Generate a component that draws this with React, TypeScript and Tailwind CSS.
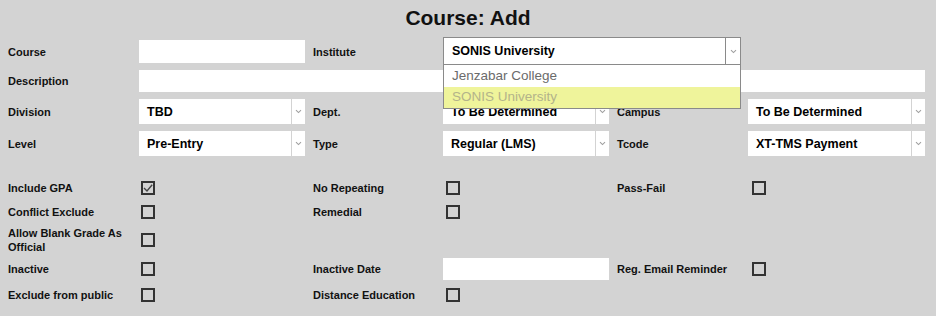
const GRID = "grid grid-cols-[131px_166px_138px_166px_139px_177px]";

function Label({ text, indent = false }: { text: string; indent?: boolean }) {
  return (
    <div className={`flex items-center text-[11px] font-bold text-[#111] leading-[14px] ${indent ? "pl-2" : ""}`}>
      {text}
    </div>
  );
}

function Chevron() {
  return (
    <svg width="7" height="5" viewBox="0 0 7 5" className="text-[#a0a0a0]">
      <path d="M1 1.2 L3.5 3.6 L6 1.2" fill="none" stroke="currentColor" strokeWidth="1.1" />
    </svg>
  );
}

function Select({ value }: { value: string }) {
  return (
    <div className="flex h-full bg-white">
      <div className="flex-1 flex items-center pl-2 pt-px text-[12.5px] font-bold text-black truncate">{value}</div>
      <div className="w-[14px] border-l border-[#d3d3d3] flex items-center justify-center">
        <Chevron />
      </div>
    </div>
  );
}

function Box({ checked = false, offset = "ml-[2px]" }: { checked?: boolean; offset?: string }) {
  return (
    <div className="flex items-center">
      <div className={`${offset} w-[14px] h-[14px] border-2 border-[#333] flex items-center justify-center`}>
        {checked && (
          <svg width="10" height="10" viewBox="0 0 10 10">
            <path d="M1 5 L4 8 L9.2 1.8" fill="none" stroke="#444" strokeWidth="1.4" />
          </svg>
        )}
      </div>
    </div>
  );
}

export default function App() {
  return (
    <div
      className="w-[936px] h-[316px] bg-[#d3d3d3] px-2 overflow-hidden"
      style={{ fontFamily: '"Liberation Sans", Arial, sans-serif' }}
    >
      <div className="h-[36px] flex items-center justify-center text-[21px] font-bold text-[#111]">Course: Add</div>

      {/* Top fields */}
      <div className={`${GRID} grid-rows-[23px_22px_25px_25px] gap-y-[7px] mt-[4px]`}>
        <Label text="Course" />
        <div className="bg-white" />
        <Label text="Institute" indent />
        <div className="relative z-10">
          <div className="absolute left-0 top-[-3px] w-[298px] border border-[#8a8a8a] bg-white">
            <div className="flex h-[26px]">
              <div className="flex-1 flex items-center pl-2 text-[12.5px] font-bold text-black">SONIS University</div>
              <div className="w-[15px] border-l border-[#8a8a8a] flex items-center justify-center">
                <Chevron />
              </div>
            </div>
            <div className="border-t border-[#8a8a8a]">
              <div className="h-[22px] flex items-center pl-2 text-[13.5px] text-[#6b6b6b]">Jenzabar College</div>
              <div className="h-[21px] flex items-center pl-2 text-[13.5px] text-[#b3b38a] bg-[#eff49b]">SONIS University</div>
            </div>
          </div>
        </div>
        <div />
        <div />

        <Label text="Description" />
        <div className="col-span-5 bg-white" />

        <Label text="Division" />
        <Select value="TBD" />
        <Label text="Dept." indent />
        <Select value="To Be Determined" />
        <Label text="Campus" indent />
        <Select value="To Be Determined" />

        <Label text="Level" />
        <Select value="Pre-Entry" />
        <Label text="Type" indent />
        <Select value="Regular (LMS)" />
        <Label text="Tcode" indent />
        <Select value="XT-TMS Payment" />
      </div>

      {/* Flags */}
      <div className={`${GRID} grid-rows-[20px_20px_28px_22px_22px] gap-y-[4px] mt-[22px]`}>
        <Label text="Include GPA" />
        <Box checked />
        <Label text="No Repeating" indent />
        <Box offset="ml-[3px]" />
        <Label text="Pass-Fail" indent />
        <Box offset="ml-[4px]" />

        <Label text="Conflict Exclude" />
        <Box />
        <Label text="Remedial" indent />
        <Box offset="ml-[3px]" />
        <div />
        <div />

        <div className="flex items-center text-[11px] font-bold text-[#111] leading-[14px] w-[122px]">
          Allow Blank Grade As Official
        </div>
        <Box />
        <div />
        <div />
        <div />
        <div />

        <Label text="Inactive" />
        <Box />
        <Label text="Inactive Date" indent />
        <div className="bg-white" />
        <Label text="Reg. Email Reminder" indent />
        <Box offset="ml-[4px]" />

        <Label text="Exclude from public" />
        <Box />
        <Label text="Distance Education" indent />
        <Box offset="ml-[3px]" />
        <div />
        <div />
      </div>
    </div>
  );
}
